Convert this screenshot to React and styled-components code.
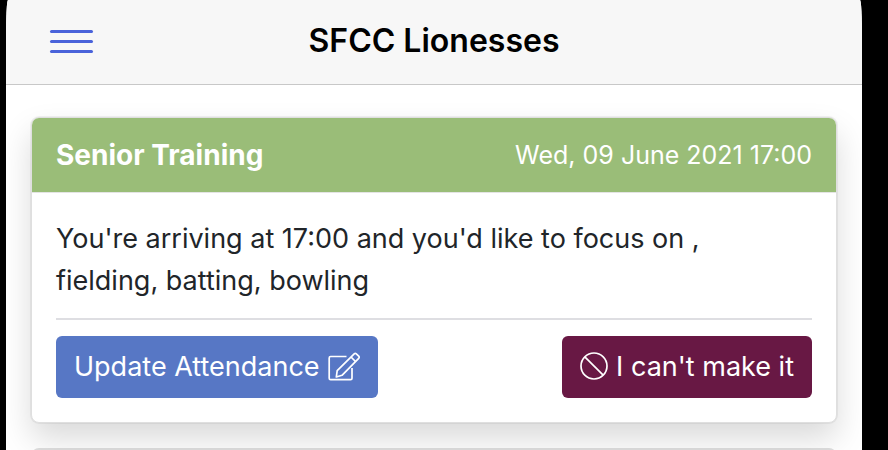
import React from 'react';
import styled, { createGlobalStyle } from 'styled-components';

const sessions = [
    {
        id: 1,
        title: 'Senior Training',
        date: 'Wed, 09 June 2021 17:00',
        text: "You're arriving at 17:00 and you'd like to focus on , fielding, batting, bowling",
    },
];

const EditIcon = () => (
    <Icon viewBox='0 0 32 30' width='32' height='30' aria-hidden='true'>
        <path d='M18.5 5.5H2.6A1.4 1.4 0 0 0 1.2 6.9v20.4a1.4 1.4 0 0 0 1.4 1.4h20a1.4 1.4 0 0 0 1.4-1.4V17' />
        <path d='M8.3 26l.9-6.3L26.2 2.8a1.5 1.5 0 0 1 2.1 0l2.4 2.4a1.5 1.5 0 0 1 0 2.1L14 24.3z' />
        <path d='M23 6l4.5 4.5' />
    </Icon>
);

const BanIcon = () => (
    <Icon viewBox='0 0 28 28' width='28' height='28' aria-hidden='true'>
        <circle cx='14' cy='14' r='13' />
        <path d='M4.8 4.8l18.4 18.4' />
    </Icon>
);

const TrainingCard = ({ title, date, text }) => {

    return (
        <Card>
            <CardHeader>
                <CardTitle>{title}</CardTitle>
                <CardDate>{date}</CardDate>
            </CardHeader>
            <CardBody>
                <CardText>{text}</CardText>
                <Divider />
                <Actions>
                    <Button type='button' $color='#5777c5'>
                        Update Attendance <EditIcon />
                    </Button>
                    <Button type='button' $color='#681844'>
                        <BanIcon /> I can't make it
                    </Button>
                </Actions>
            </CardBody>
        </Card>
    );
}

const App = () => {

    return (
        <>
            <GlobalStyle />
            <Screen>
                <TopBar>
                    <MenuButton type='button' aria-label='Menu'>
                        <span></span>
                        <span></span>
                        <span></span>
                    </MenuButton>
                    <PageTitle>SFCC Lionesses</PageTitle>
                </TopBar>
                <Content>
                    {sessions.map(session => <TrainingCard key={session.id} {...session} />)}
                    <NextCard />
                </Content>
            </Screen>
        </>
    );
}

const GlobalStyle = createGlobalStyle`
    * {
        box-sizing: border-box;
    }

    body {
        margin: 0;
        background: #000;
        color: #212529;
        font-family: Inter, 'Liberation Sans', sans-serif;
        font-size: 27px;
        line-height: 42px;
    }
`;

const Screen = styled.div`
    height: 100vh;
    margin: 0 26px 0 6px;
    background: #fff;
    border-radius: 2px 2px 0 0 / 36px 36px 0 0;
    overflow: hidden;
`;

const TopBar = styled.header`
    display: grid;
    grid-template-columns: 43px 1fr 43px;
    align-items: center;
    padding: 19px 44px 21px;
    background: #f7f7f7;
    border-bottom: 1px solid #c8c8c8;
`;

const MenuButton = styled.button`
    display: flex;
    flex-direction: column;
    gap: 7px;
    padding: 0;
    border: 0;
    background: none;
    cursor: pointer;

    span {
        width: 100%;
        height: 3px;
        border-radius: 2px;
        background: #4a63da;
    }
`;

const PageTitle = styled.h1`
    margin: 0;
    font-size: 32px;
    font-weight: 600;
    line-height: 44px;
    text-align: center;
    color: #000;
`;

const Content = styled.main`
    display: flex;
    flex-direction: column;
    gap: 25px;
    padding: 32px 25px;
`;

const Card = styled.article`
    position: relative;
    z-index: 1;
    border: 1px solid #dfdfdf;
    border-radius: 8px;
    background: #fff;
    box-shadow: 0 0 0 1px rgba(0, 0, 0, 0.05), 0 16px 32px rgba(0, 0, 0, 0.15);
`;

const CardHeader = styled.header`
    display: flex;
    align-items: center;
    justify-content: space-between;
    padding: 16px 24px;
    border-radius: 7px 7px 0 0;
    background: #9abd78;
    color: #fff;
`;

const CardTitle = styled.h2`
    margin: 0;
    font-size: 28px;
    font-weight: 700;
    line-height: 42px;
`;

const CardDate = styled.span`
    font-size: 25px;
`;

const CardBody = styled.div`
    padding: 25px 24px 24px;
    border-top: 1px solid #e4e4e4;
`;

const CardText = styled.p`
    margin: 0;
    padding-right: 24px;
`;

const Divider = styled.hr`
    height: 2px;
    margin: 16px 0;
    border: 0;
    background: #dedee2;
`;

const Actions = styled.div`
    display: flex;
    justify-content: space-between;
`;

const Button = styled.button`
    display: flex;
    align-items: center;
    gap: 8px;
    padding: 10px 18px;
    border: 0;
    border-radius: 6px;
    background: ${props => props.$color};
    color: #fff;
    font: inherit;
    cursor: pointer;
`;

const Icon = styled.svg`
    flex: none;
    margin-bottom: 2px;
    fill: none;
    stroke: currentColor;
    stroke-width: 1.7;
    stroke-linejoin: round;
`;

const NextCard = styled.div`
    flex: none;
    height: 74px;
    border: 2px solid #dfdfdf;
    border-radius: 8px;
    background: #9abd78;
`;

export default App;
